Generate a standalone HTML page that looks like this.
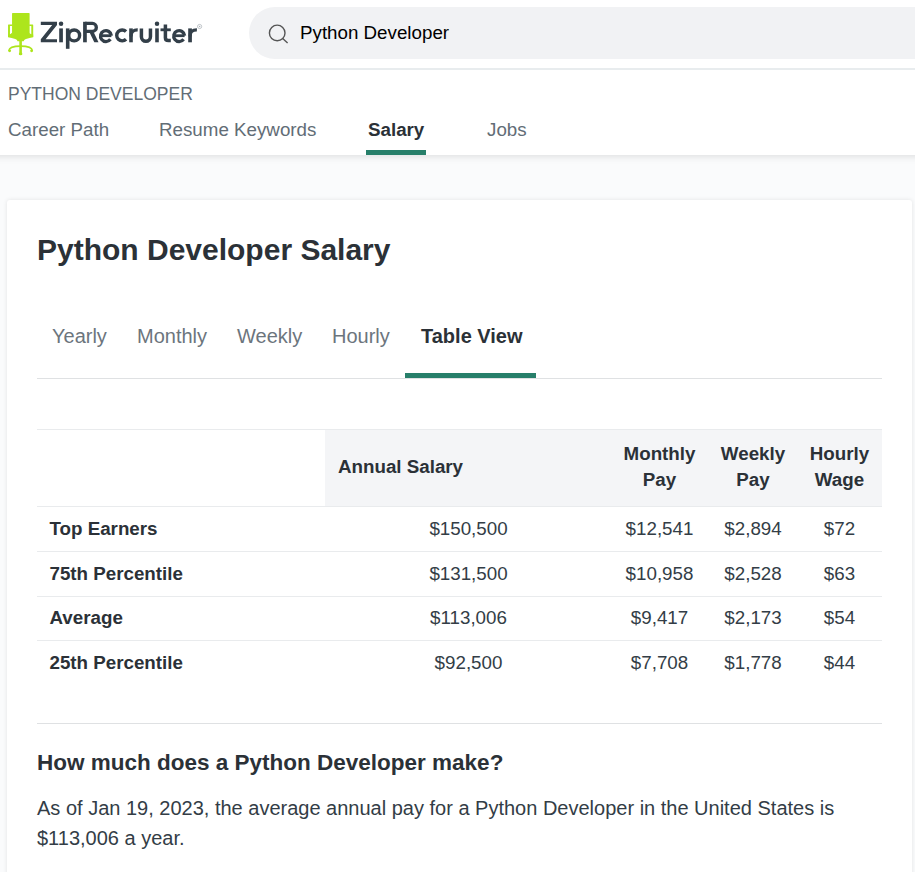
<!DOCTYPE html>
<html><head><meta charset="utf-8">
<style>
*{box-sizing:border-box;margin:0;padding:0}
html,body{width:915px;height:872px;overflow:hidden}
body{font-family:"Liberation Sans",sans-serif;background:#fafbfc;color:#2b3137;position:relative}
.header{position:absolute;left:0;top:0;width:915px;height:70px;background:#fff;border-bottom:2px solid #e8ecee;z-index:2}
.logo{position:absolute;left:0;top:0}
.search{position:absolute;left:249px;top:7px;width:700px;height:52px;border-radius:26px;background:#f1f2f4}
.search svg{position:absolute;left:17px;top:16px}
.search span{position:absolute;left:51px;top:15px;font-size:18.75px;line-height:22px;color:#000}
.subnav{position:absolute;left:-30px;top:70px;width:975px;height:85px;background:#fff;box-shadow:0 1px 8px rgba(0,0,0,.13)}
.subnav .ttl{position:absolute;left:38px;top:14px;font-size:17.5px;line-height:20px;color:#626d76}
.subnav a{position:absolute;top:49px;font-size:18.75px;line-height:22px;color:#626d76;white-space:nowrap}
.subnav a.act{font-weight:bold;color:#2b3137}
.subnav .bar{position:absolute;left:396px;top:80px;width:60px;height:5px;background:#277f6a}
.card{position:absolute;left:7px;top:200px;width:905px;height:700px;background:#fff;border-radius:3px;box-shadow:0 0 4px rgba(0,0,0,.10)}
h1{position:absolute;left:30px;top:32px;font-size:30px;line-height:36px;font-weight:bold;color:#2b3137;white-space:nowrap}
.tabs{position:absolute;left:30px;top:112px;width:845px;height:67px;border-bottom:1px solid #dfe1e3}
.tabs a{position:absolute;top:12px;font-size:20px;line-height:24px;color:#6c757d;white-space:nowrap}
.tabs a.act{font-weight:bold;color:#2b3137}
.tabs .bar{position:absolute;left:368px;top:61px;width:131px;height:5px;background:#277f6a}
table{position:absolute;left:30px;top:229px;width:845px;border-collapse:collapse;font-size:18.75px;color:#333d46}
th,td{border-top:1px solid #e9ebed;text-align:center;vertical-align:middle}
thead th{height:77px;background:#f4f5f7;font-weight:bold;line-height:26px;color:#2b3137;padding-bottom:3px}
tr>:last-child{padding-right:2px}
thead th.e{background:#fff}
tbody td{height:45px}
tbody tr:nth-child(n+3) td{height:44px}
tbody tr:nth-child(3)>*{padding-bottom:2px}
tbody th{font-weight:bold;text-align:left;padding-left:12.5px;color:#2b3137}
.hr{position:absolute;left:30px;top:523px;width:845px;height:1px;background:#dfe1e3}
h2{position:absolute;left:30px;top:550px;font-size:22.5px;line-height:26px;font-weight:bold;color:#2b3137;white-space:nowrap}
p{position:absolute;left:30px;top:593px;width:845px;font-size:20px;line-height:30px;color:#333d46}
</style></head><body>
<div class="header">
<svg class="logo" width="230" height="68" viewBox="0 0 230 68">
<g fill="#ade51c">
<rect x="12.050" y="13.100" width="17.550" height="24" rx="0.600"/>
<path d="M8.050 24.900q0-.5.500-.5h3.500v1.500h-2.100v8.500l2.100-1.600v4.400h-4z"/>
<path d="M33.200 24.900q0-.5-.5-.5h-3.500v1.500h2.100v8.500l-2.100-1.600v4.400h4z"/>
<path d="M8.050 34.500h25.150v2.600l-7.200 1.800q-1.200.3-1.700 1.200l-.6 1.100h-6.150l-.6-1.100q-.5-.9-1.700-1.200l-7.200-1.800z"/>
<rect x="19.300" y="40" width="2.600" height="14"/>
<circle cx="9.700" cy="50.800" r="1.350"/><circle cx="31.550" cy="50.800" r="1.350"/><ellipse cx="20.600" cy="53.900" rx="1.800" ry="1.400"/>
</g>
<path d="M8.900 50.600c.3-3.300 6-4.500 11.700-4.500s11.400 1.200 11.700 4.500" fill="none" stroke="#ade51c" stroke-width="1.600" stroke-linecap="round"/>
<g fill="#333f49">
<path d="M40.800 21.800H57v3.100L45.600 39.200H57v3.100H40.800v-3.100L52.200 24.900H40.800z"/>
<rect x="59.200" y="28.400" width="3.700" height="13.900"/><circle cx="61.050" cy="23.700" r="2.250"/>
<rect x="65.900" y="28.400" width="3.600" height="20.400"/>
<rect x="83.100" y="21.800" width="3.700" height="20.500"/>
<path d="M89.600 32.600l4-.6 4.900 10.300h-4.200z"/>
<rect x="129.200" y="28.400" width="3.600" height="13.900"/>
<rect x="155.200" y="28.400" width="3.600" height="13.900"/><circle cx="157" cy="23.700" r="2.250"/>
<rect x="160.500" y="28.400" width="10.300" height="2.800"/>
<rect x="188.200" y="28.400" width="3.700" height="13.900"/>
</g>
<g fill="none" stroke="#333f49" stroke-width="3.400">
<circle cx="74.150" cy="35.400" r="5.450"/>
<path d="M85 23.450h7.400a3.950 3.950 0 0 1 0 7.900H85" stroke-width="3.300"/>
<path d="M100.300 35.700h11.100" stroke-width="2.800"/>
<path d="M111.400 35.600a5.450 5.450 0 1 0-1 3.700" stroke-width="3.300"/>
<path d="M126.050 31.550a5.450 5.450 0 1 0 0 7.700"/>
<path d="M131 36.500c0-4.800 2.600-6.800 6.700-6.700" stroke-width="3.200"/>
<path d="M141.400 28.400v8.300a4.500 4.500 0 0 0 9.050 0v-8.300" stroke-width="3.500"/>
<path d="M165.400 24.400v13.300q0 2.900 3 2.900h2.400" stroke-width="3.500"/>
<path d="M173.500 35.700h11.100" stroke-width="2.800"/>
<path d="M184.600 35.600a5.450 5.450 0 1 0-1 3.700" stroke-width="3.300"/>
<path d="M190 36.500c0-4.800 2.600-6.800 6.900-6.700" stroke-width="3.200"/>
</g>
<circle cx="199.600" cy="26.500" r="2.100" fill="none" stroke="#9aa3aa" stroke-width="0.600"/>
<circle cx="199.600" cy="26.500" r="0.800" fill="#aab2b8"/>
</svg>
<div class="search"><svg width="24" height="24" viewBox="0 0 24 24" fill="none" stroke="#555" stroke-width="1.400"><circle cx="11.200" cy="9.900" r="7.800"/><path d="M16.700 15.600L21.600 20"/></svg><span>Python Developer</span></div>
</div>
<div class="subnav">
<div class="ttl">PYTHON DEVELOPER</div>
<a style="left:38px">Career Path</a>
<a style="left:189px">Resume Keywords</a>
<a class="act" style="left:398px">Salary</a>
<a style="left:517px">Jobs</a>
<div class="bar"></div>
</div>
<div class="card">
<h1>Python Developer Salary</h1>
<div class="tabs">
<a style="left:15px">Yearly</a>
<a style="left:100px">Monthly</a>
<a style="left:200px">Weekly</a>
<a style="left:295px">Hourly</a>
<a class="act" style="left:384px">Table View</a>
<div class="bar"></div>
</div>
<table>
<colgroup><col style="width:288px"><col style="width:287px"><col style="width:95px"><col style="width:92px"><col style="width:83px"></colgroup>
<thead><tr><th class="e"></th><th style="text-align:left;padding-left:13px">Annual Salary</th><th>Monthly<br>Pay</th><th>Weekly<br>Pay</th><th>Hourly<br>Wage</th></tr></thead>
<tbody>
<tr><th>Top Earners</th><td>$150,500</td><td>$12,541</td><td>$2,894</td><td>$72</td></tr>
<tr><th>75th Percentile</th><td>$131,500</td><td>$10,958</td><td>$2,528</td><td>$63</td></tr>
<tr><th>Average</th><td>$113,006</td><td>$9,417</td><td>$2,173</td><td>$54</td></tr>
<tr><th>25th Percentile</th><td>$92,500</td><td>$7,708</td><td>$1,778</td><td>$44</td></tr>
</tbody></table>
<div class="hr"></div>
<h2>How much does a Python Developer make?</h2>
<p>As of Jan 19, 2023, the average annual pay for a Python Developer in the United States is $113,006 a year.</p>
</div>
</body></html>
